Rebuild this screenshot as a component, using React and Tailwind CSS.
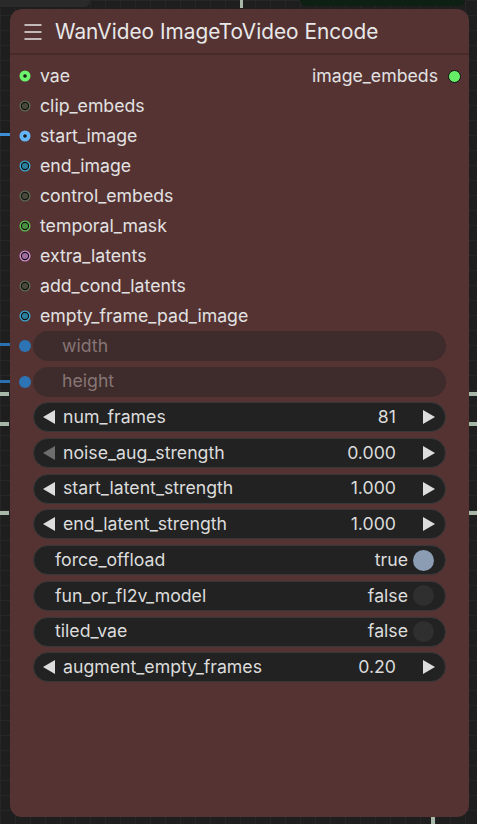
import { Menu } from 'lucide-react'

const inputs = [
	{ name: 'vae', color: '#6cf46c', inner: '#1a1a1a', filled: true },
	{ name: 'clip_embeds', color: '#5b6a52', inner: '#4a4a3c' },
	{ name: 'start_image', color: '#64b5f6', inner: '#1a1a1a', filled: true },
	{ name: 'end_image', color: '#3aa8d0', inner: '#2d7f9e' },
	{ name: 'control_embeds', color: '#5b6a52', inner: '#4a4a3c' },
	{ name: 'temporal_mask', color: '#5fbf50', inner: '#4a8f40' },
	{ name: 'extra_latents', color: '#d08ad0', inner: '#a06ca0' },
	{ name: 'add_cond_latents', color: '#5b6a52', inner: '#4a4a3c' },
	{ name: 'empty_frame_pad_image', color: '#3aa8d0', inner: '#2d7f9e' },
]

const widgets = [
	{ type: 'number', name: 'num_frames', value: '81' },
	{ type: 'number', name: 'noise_aug_strength', value: '0.000', atMin: true },
	{ type: 'number', name: 'start_latent_strength', value: '1.000' },
	{ type: 'number', name: 'end_latent_strength', value: '1.000' },
	{ type: 'toggle', name: 'force_offload', value: true },
	{ type: 'toggle', name: 'fun_or_fl2v_model', value: false },
	{ type: 'toggle', name: 'tiled_vae', value: false },
	{ type: 'number', name: 'augment_empty_frames', value: '0.20' },
]

const Slot = ({ color, inner, filled }) => (
	<svg width="12" height="12" viewBox="0 0 12 12" className="shrink-0">
		<circle cx="6" cy="6" r="5.5" fill={color} />
		{filled ? (
			<circle cx="6" cy="6" r="1.8" fill={inner} />
		) : (
			<circle cx="6" cy="6" r="3.6" fill={inner} stroke="#111" strokeWidth="1.1" />
		)}
	</svg>
)

const Arrow = ({ dir, dim }) => (
	<svg width="14" height="16" viewBox="0 0 14 16" className="shrink-0">
		<polygon
			points={dir === 'left' ? '13,1 13,15 1,8' : '1,1 1,15 13,8'}
			fill={dim ? '#6e6e6e' : '#dddddd'}
		/>
	</svg>
)

const NumberWidget = ({ name, value, atMin }) => (
	<div className="flex h-[30px] items-center rounded-full border border-[#383838] bg-[#222222] pl-[8px] pr-[9px]">
		<Arrow dir="left" dim={atMin} />
		<span className="ml-[7px] flex-1 text-[#dcdcdc]">{name}</span>
		<span className="mr-[26px] text-[#dcdcdc]">{value}</span>
		<Arrow dir="right" />
	</div>
)

const ToggleWidget = ({ name, value }) => (
	<div className="flex h-[30px] items-center rounded-full border border-[#383838] bg-[#222222] pl-[21px] pr-[11px]">
		<span className="flex-1 text-[#dcdcdc]">{name}</span>
		<span className="mr-[5px] text-[#dcdcdc]">{value ? 'true' : 'false'}</span>
		<span
			className={
				value
					? 'h-[21px] w-[21px] rounded-full bg-[#8b9db3]'
					: 'h-[21px] w-[21px] rounded-full bg-[#2f2f2f]'
			}
		/>
	</div>
)

const App = () => {
	return (
		<div
			className="relative h-[824px] w-[477px] overflow-hidden bg-[#1e1e1e] bg-[linear-gradient(#262626_1px,transparent_1px),linear-gradient(90deg,#262626_1px,transparent_1px)] bg-[size:15px_15px] pt-[9px] pl-[10px]"
			style={{ fontFamily: 'Inter, "Noto Sans", sans-serif' }}
		>
			{/* bits of neighbouring nodes and links */}
			<div className="absolute left-0 top-0 h-[7px] w-[90px] rounded-br-[6px] bg-[#2a2a2a]" />
			<div className="absolute left-[240px] top-0 h-[8px] w-[3px] bg-[#a8b8a8]" />
			<div className="absolute left-[300px] top-0 h-[6px] w-[165px] rounded-b-[6px] bg-[#0e1f14]" />
			<div className="absolute left-0 top-[133px] h-[3px] w-[10px] bg-[#3d8ed6]" />
			<div className="absolute left-0 top-[343px] h-[3px] w-[10px] bg-[#2a6fb0]" />
			<div className="absolute left-0 top-[380px] h-[3px] w-[10px] bg-[#2a6fb0]" />
			<div className="absolute left-0 top-[392px] h-[4px] w-[9px] bg-[#a8b8a8]" />
			<div className="absolute left-0 top-[422px] h-[4px] w-[9px] bg-[#a8b8a8]" />
			<div className="absolute left-0 top-[511px] h-[4px] w-[9px] bg-[#a8b8a8]" />
			<div className="absolute right-0 top-[392px] h-[4px] w-[8px] bg-[#a8b8a8]" />
			<div className="absolute right-0 top-[422px] h-[4px] w-[8px] bg-[#a8b8a8]" />
			<div className="absolute right-0 top-[511px] h-[4px] w-[8px] bg-[#a8b8a8]" />
			<div className="absolute right-[42px] top-[817px] h-[7px] w-[4px] bg-[#a8b8a8]" />

			<div className="relative flex h-[808px] w-[459px] flex-col rounded-[12px] bg-[#553333]">
				<div className="flex h-[46px] items-center border-b-2 border-[#492a2a] pl-[11px] pt-[1px]">
					<Menu size={24} strokeWidth={1.5} color="#e6e6e6" />
					<span className="ml-[10px] text-[20.8px] text-[#e8e8e8]">WanVideo ImageToVideo Encode</span>
				</div>

				<div className="flex flex-col pt-[6px] text-[17.7px]">
					{inputs.map((input, i) => (
						<div key={input.name} className="flex h-[30px] items-center pl-[9px] pr-[8px]">
							<Slot color={input.color} inner={input.inner} filled={input.filled} />
							<span className="ml-[9px] text-[#e2e2e2]">{input.name}</span>
							{i === 0 && (
								<>
									<span className="ml-auto text-[#e2e2e2]">image_embeds</span>
									<span className="ml-[10px] h-[13px] w-[13px] rounded-full border border-[#111] bg-[#66ee66]" />
								</>
							)}
						</div>
					))}
				</div>

				<div className="flex flex-col gap-[5.7px] text-[17.7px]">
					{['width', 'height'].map((name) => (
						<div key={name} className="flex items-center pl-[9px] pr-[23px]">
							<span className="h-[12px] w-[12px] shrink-0 rounded-full bg-[#2c74b4]" />
							<div className="ml-[2px] flex h-[30px] flex-1 items-center rounded-full bg-[#3e2c2c] pl-[29px] text-[#877575]">
								{name}
							</div>
						</div>
					))}
					{widgets.map((w) => (
						<div key={w.name} className="pl-[23px] pr-[23px]">
							{w.type === 'number' ? (
								<NumberWidget name={w.name} value={w.value} atMin={w.atMin} />
							) : (
								<ToggleWidget name={w.name} value={w.value} />
							)}
						</div>
					))}
				</div>
			</div>
		</div>
	)
}

export default App
